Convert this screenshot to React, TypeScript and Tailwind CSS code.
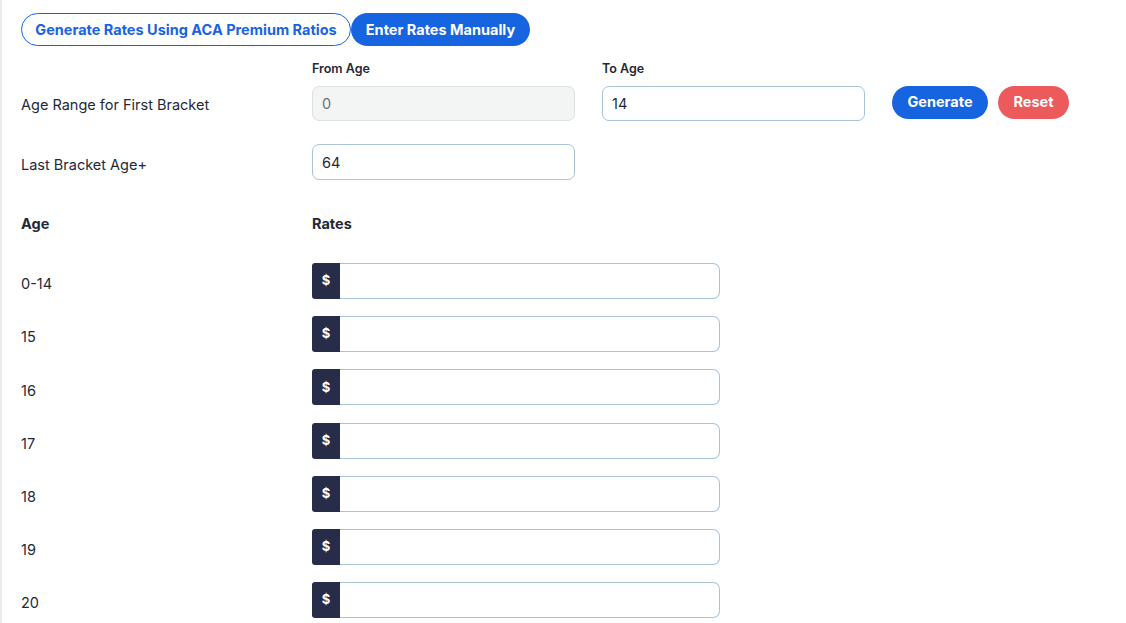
const ages = ['0-14', '15', '16', '17', '18', '19', '20']

function RateInput() {
  return (
    <div className="flex h-9 w-[408px]">
      <div className="flex w-[28px] items-center justify-center rounded-l-[3px] bg-[#272c48] text-[13px] font-bold text-white">
        $
      </div>
      <input
        className="h-9 flex-1 rounded-r-[7px] border border-l-0 border-[#a9c2d9] bg-white px-[9px] text-sm outline-none"
        defaultValue=""
      />
    </div>
  )
}

export default function App() {
  return (
    <div
      className="min-h-[623px] border-l-2 border-[#e8ebef] bg-white pl-[19px] pt-[13px] text-[14.5px] text-[#1f2937]"
      style={{ fontFamily: 'Inter, "Noto Sans", sans-serif' }}
    >
      <div className="flex">
        <button className="h-[33px] w-[330px] rounded-full border border-[#1764e0] bg-white text-[14.5px] font-bold text-[#1764e0]">
          Generate Rates Using ACA Premium Ratios
        </button>
        <button className="h-[33px] w-[179px] rounded-full bg-[#1764e0] text-[14.5px] font-bold text-white">
          Enter Rates Manually
        </button>
      </div>

      <div className="mt-[15px] flex">
        <div className="w-[291px]" />
        <div className="h-4 w-[290px] text-[12.5px] font-semibold leading-4">From Age</div>
        <div className="h-4 w-[263px] text-[12.5px] font-semibold leading-4">To Age</div>
      </div>

      <div className="mt-[9px] flex items-start">
        <div className="w-[291px] pt-[8px]">Age Range for First Bracket</div>
        <input
          className="h-[35px] w-[263px] rounded-[7px] border border-[#dde1e4] bg-[#f3f4f4] px-[9px] text-[14.5px] text-[#6b7280] outline-none"
          defaultValue="0"
          disabled
        />
        <input
          className="ml-[27px] h-[35px] w-[263px] rounded-[7px] border border-[#a9c2d9] bg-white px-[9px] text-[14.5px] outline-none"
          defaultValue="14"
        />
        <button className="ml-[27px] h-[33px] w-[96px] rounded-full bg-[#1764e0] pb-[2px] text-[14.5px] font-bold text-white">
          Generate
        </button>
        <button className="ml-[10px] h-[33px] w-[71px] rounded-full bg-[#ec5a5b] pb-[2px] text-[14.5px] font-bold text-white">
          Reset
        </button>
      </div>

      <div className="mt-[23px] flex items-center">
        <div className="w-[291px] pt-[5px]">Last Bracket Age+</div>
        <input
          className="h-9 w-[263px] rounded-[7px] border border-[#a9c2d9] bg-white px-[9px] text-[14.5px] outline-none"
          defaultValue="64"
        />
      </div>

      <div className="mt-[34px] flex h-5 items-center font-bold">
        <div className="w-[291px]">Age</div>
        <div>Rates</div>
      </div>

      <div className="mt-[29px] flex flex-col gap-[17.2px]">
        {ages.map((a) => (
          <div key={a} className="flex items-center">
            <div className="w-[291px] pt-[6px]">{a}</div>
            <RateInput />
          </div>
        ))}
      </div>
    </div>
  )
}
